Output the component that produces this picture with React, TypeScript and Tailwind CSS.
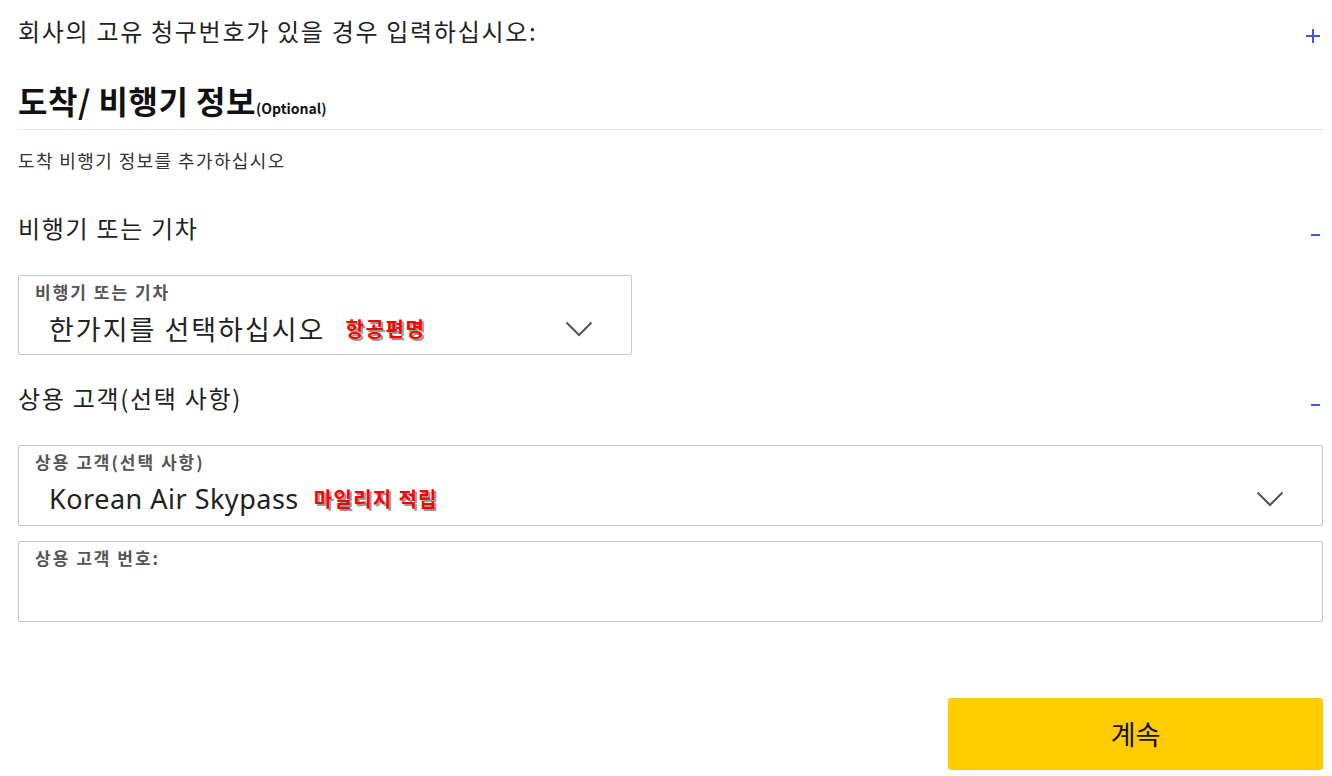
import React from "react";

const font = { fontFamily: '"Noto Sans CJK KR", "Noto Sans", sans-serif' };

function Chevron() {
  return (
    <svg width="28" height="16" viewBox="0 0 28 16" fill="none">
      <path d="M1.5 1.5 L14 14 L26.5 1.5" stroke="#555" strokeWidth="2" />
    </svg>
  );
}

function Minus() {
  return <div className="w-[9px] h-[2px] bg-[#3b5bdb]" />;
}

function Plus() {
  return (
    <div className="relative w-[14px] h-[14px]">
      <div className="absolute left-0 top-[6px] w-[14px] h-[2px] bg-[#3b5bdb]" />
      <div className="absolute left-[6px] top-0 w-[2px] h-[14px] bg-[#3b5bdb]" />
    </div>
  );
}

export default function App() {
  return (
    <div className="w-[1332px] h-[776px] bg-white text-[#1a1a1a] overflow-hidden" style={font}>
      <div className="pl-[18px] pr-[9px]">
        <div className="flex justify-between items-start pt-[14px] h-[60px]">
          <div className="text-[24px] tracking-[1.7px] leading-[34px] text-[#222]">회사의 고유 청구번호가 있을 경우 입력하십시오:</div>
          <div className="pt-[15px] pr-[3px]">
            <Plus />
          </div>
        </div>
        <div className="flex items-baseline pt-[20px] pb-[9px] border-b border-[#e5e5e5]">
          <span className="text-[32px] font-bold tracking-[0.5px] leading-[40px] text-[#111]">도착/ 비행기 정보</span>
          <span className="text-[14px] font-bold leading-[20px] text-[#111]">(Optional)</span>
        </div>
        <div className="text-[18px] tracking-[1.4px] text-[#333] pt-[18px] leading-[24px]">도착 비행기 정보를 추가하십시오</div>

        <div className="flex justify-between items-center mt-[39px] h-[34px]">
          <div className="text-[24px] tracking-[1.7px] text-[#222]">비행기 또는 기차</div>
          <div className="pt-[14px] pr-[3px]"><Minus /></div>
        </div>

        <div className="mt-[30px] w-[614px] h-[80px] border border-[#c8c8c8] rounded-[2px] px-[16px] pt-[5px]">
          <div className="text-[17px] font-bold tracking-[2px] text-[#555] leading-[22px]">비행기 또는 기차</div>
          <div className="flex items-center justify-between pl-[14px] pr-[22px] mt-[9px]">
            <div className="flex items-center">
              <span className="text-[27px] tracking-[2px] text-[#222] leading-[34px]">한가지를 선택하십시오</span>
              <span className="ml-[20px] text-[20px] tracking-[1.6px] font-bold text-[#ff0000] [text-shadow:2px_2px_0_#999]">항공편명</span>
            </div>
            <Chevron />
          </div>
        </div>

        <div className="flex justify-between items-center mt-[26px] h-[34px]">
          <div className="text-[24px] tracking-[1.7px] text-[#222]">상용 고객(선택 사항)</div>
          <div className="pt-[14px] pr-[3px]"><Minus /></div>
        </div>

        <div className="mt-[30px] h-[81px] border border-[#c8c8c8] rounded-[2px] px-[16px] pt-[5px]">
          <div className="text-[17px] font-bold tracking-[2px] text-[#555] leading-[22px]">상용 고객(선택 사항)</div>
          <div className="flex items-center justify-between pl-[14px] pr-[22px] mt-[9px]">
            <div className="flex items-center">
              <span className="text-[27px] tracking-[0.5px] text-[#222] leading-[34px]" style={{ fontFamily: '"Noto Sans", sans-serif' }}>Korean Air Skypass</span>
              <span className="ml-[15px] text-[20px] tracking-[1.3px] font-bold text-[#ff0000] [text-shadow:2px_2px_0_#999]">마일리지 적립</span>
            </div>
            <Chevron />
          </div>
        </div>

        <div className="mt-[15px] h-[81px] border border-[#c8c8c8] rounded-[2px] px-[16px] pt-[5px]">
          <div className="text-[17px] font-bold tracking-[2px] text-[#555] leading-[22px]">상용 고객 번호:</div>
        </div>

        <div className="flex justify-end mt-[76px]">
          <button className="w-[375px] h-[72px] bg-[#ffcc00] rounded-[3px] text-[27px] text-[#111]">계속</button>
        </div>
      </div>
    </div>
  );
}
